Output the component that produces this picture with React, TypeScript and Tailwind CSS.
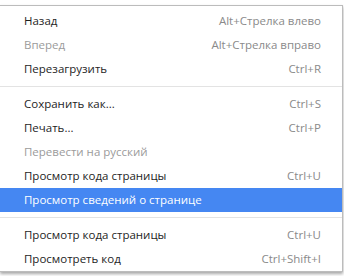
type Item =
    | { kind: "item"; label: string; shortcut?: string; disabled?: boolean; active?: boolean }
    | { kind: "sep" };

const items: Item[] = [
    { kind: "item", label: "Назад", shortcut: "Alt+Стрелка влево" },
    { kind: "item", label: "Вперед", shortcut: "Alt+Стрелка вправо", disabled: true },
    { kind: "item", label: "Перезагрузить", shortcut: "Ctrl+R" },
    { kind: "sep" },
    { kind: "item", label: "Сохранить как...", shortcut: "Ctrl+S" },
    { kind: "item", label: "Печать...", shortcut: "Ctrl+P" },
    { kind: "item", label: "Перевести на русский", disabled: true },
    { kind: "item", label: "Просмотр кода страницы", shortcut: "Ctrl+U" },
    { kind: "item", label: "Просмотр сведений о странице", active: true },
    { kind: "sep" },
    { kind: "item", label: "Просмотр кода страницы", shortcut: "Ctrl+U" },
    { kind: "item", label: "Просмотреть код", shortcut: "Ctrl+Shift+I" },
];

function App() {
    return (
        <div
            className="w-[344px] h-[276px] bg-white pt-[5px] overflow-hidden"
            style={{ fontFamily: '"Open Sans", "Noto Sans", sans-serif' }}
        >
            <div className="w-[343px] bg-white border-t border-r border-b border-[#bcbcbc] pt-[3px] shadow-[0_2px_3px_rgba(0,0,0,0.35)]">
                {items.map((item, i) =>
                    item.kind === "sep" ? (
                        <div key={i} className="py-[5px]">
                            <div className="h-px bg-[#e3e3e3]" />
                        </div>
                    ) : (
                        <div
                            key={i}
                            className={
                                "h-6 flex items-center justify-between pl-6 pr-[21px] text-[11.5px] " +
                                (item.active ? "bg-[#4587f2] text-white" : "")
                            }
                        >
                            <span
                                className={
                                    item.active ? "text-white" : item.disabled ? "text-[#9b9b9b]" : "text-[#1e1e1e]"
                                }
                            >
                                {item.label}
                            </span>
                            {item.shortcut && <span className="text-[#8a8a8a]">{item.shortcut}</span>}
                        </div>
                    )
                )}
            </div>
        </div>
    );
}

export default App;
